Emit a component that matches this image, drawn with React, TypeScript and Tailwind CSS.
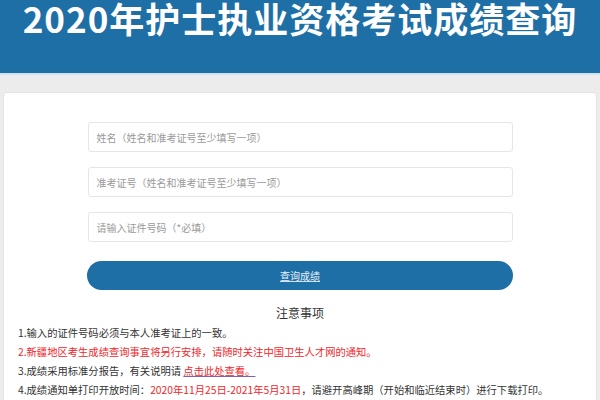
const FONT = { fontFamily: '"Noto Sans CJK SC", "Noto Sans", sans-serif' };

function Field({ placeholder }: { placeholder: string }) {
  return (
    <div className="flex h-[30px] w-[425px] items-center rounded-[3px] border border-[#e6e6e6] bg-white px-[8px] text-[10px] text-[#9a9a9a]">
      {placeholder}
    </div>
  );
}

export default function App() {
  return (
    <div className="h-[400px] w-[600px] overflow-hidden bg-[#ececec]" style={FONT}>
      <div className="h-[75px] border-b-2 border-[#cfe2f1] bg-[#1f6fa7]">
        <h1 className="text-center text-[35px] font-bold leading-[36px] tracking-[1px] text-white">
          2020年护士执业资格考试成绩查询
        </h1>
      </div>

      <div className="px-[3px] pt-[17px]">
        <div className="h-[320px] rounded-t-[4px] border border-[#e3e3e3] bg-white px-[14px] pt-[29px]">
          <div className="flex flex-col items-center gap-[15px]">
            <Field placeholder="姓名（姓名和准考证号至少填写一项）" />
            <Field placeholder="准考证号（姓名和准考证号至少填写一项）" />
            <Field placeholder="请输入证件号码（*必填）" />
          </div>

          <button className="mx-auto mt-[19px] flex h-[29px] w-[426px] items-center justify-center rounded-full bg-[#1f6fa7] text-[10px] text-[#e8f1f8] underline decoration-[#cfe2f1]">
            查询成绩
          </button>

          <p className="mt-[15px] text-center text-[12px] leading-[16px] text-[#333]">注意事项</p>

          <div className="mt-[2px] text-[10.3px] leading-[19px] text-[#333]">
            <p>1.输入的证件号码必须与本人准考证上的一致。</p>
            <p className="text-[#f0262a]">2.新疆地区考生成绩查询事宜将另行安排，请随时关注中国卫生人才网的通知。</p>
            <p>
              3.成绩采用标准分报告，有关说明请{" "}
              <span className="text-[#f0262a] underline decoration-[#7b62b8]">点击此处查看。</span>
            </p>
            <p>
              4.成绩通知单打印开放时间：
              <span className="text-[#f0262a]">2020年11月25日-2021年5月31日</span>
              ，请避开高峰期（开始和临近结束时）进行下载打印。
            </p>
          </div>
        </div>
      </div>
    </div>
  );
}
